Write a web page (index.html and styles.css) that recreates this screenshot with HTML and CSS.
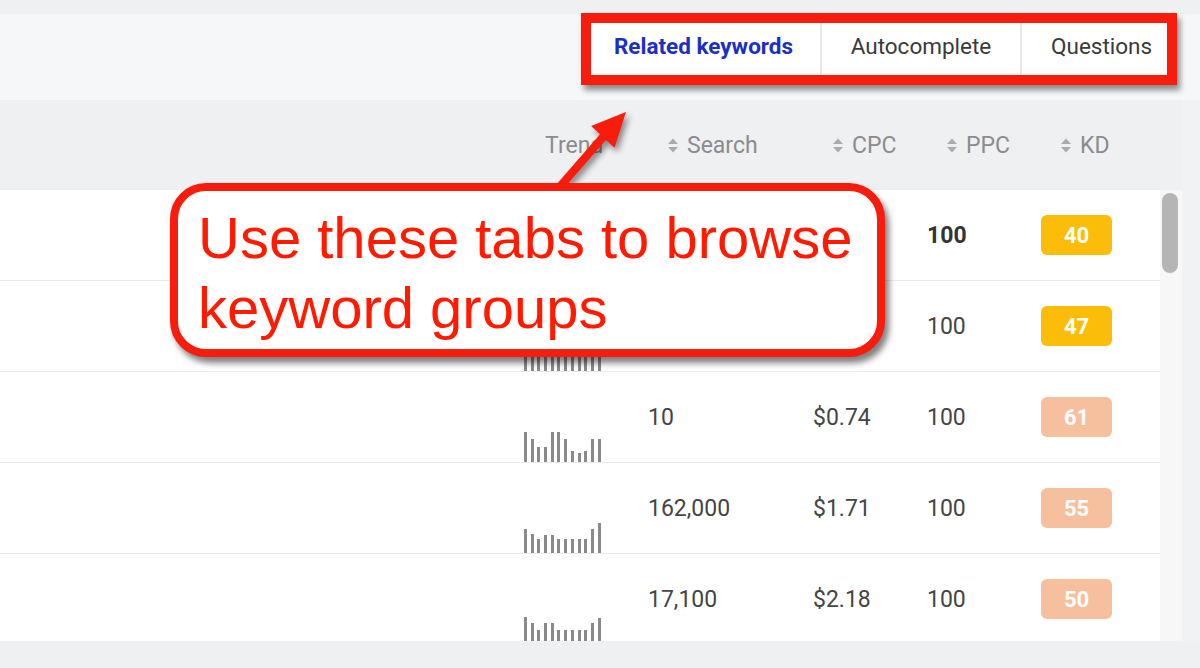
FILE: index.html
```html
<!DOCTYPE html>
<html lang="en">
<head>
<meta charset="utf-8">
<title>Keywords</title>
<link rel="stylesheet" href="styles.css">
</head>
<body>
<div class="page">
  <header class="topbar">
    <nav class="tabs">
      <div class="tab tab-related">Related keywords</div>
      <div class="tab tab-auto">Autocomplete</div>
      <div class="tab tab-questions">Questions</div>
    </nav>
  </header>

  <section class="grid-area">
    <div class="main">
      <div class="thead">
        <div class="th th-kw"></div>
        <div class="th th-trend">Trend</div>
        <div class="th"><svg class="sort" viewBox="0 0 10 15"><polygon points="0,6 5,0.5 10,6"/><polygon points="0,9 10,9 5,14.5"/></svg>Search</div>
        <div class="th"><svg class="sort" viewBox="0 0 10 15"><polygon points="0,6 5,0.5 10,6"/><polygon points="0,9 10,9 5,14.5"/></svg>CPC</div>
        <div class="th"><svg class="sort" viewBox="0 0 10 15"><polygon points="0,6 5,0.5 10,6"/><polygon points="0,9 10,9 5,14.5"/></svg>PPC</div>
        <div class="th"><svg class="sort" viewBox="0 0 10 15"><polygon points="0,6 5,0.5 10,6"/><polygon points="0,9 10,9 5,14.5"/></svg>KD</div>
      </div>

      <div class="tbody-wrap">
        <div class="rows">
          <div class="row row-active">
            <div class="td td-kw"></div>
            <div class="td td-trend"><div class="spark">
              <i class="bar" style="height:20px"></i><i class="bar" style="height:16px"></i><i class="bar" style="height:18px"></i><i class="bar" style="height:22px"></i><i class="bar" style="height:18px"></i><i class="bar" style="height:16px"></i><i class="bar" style="height:16px"></i><i class="bar" style="height:18px"></i><i class="bar" style="height:20px"></i><i class="bar" style="height:16px"></i><i class="bar" style="height:22px"></i><i class="bar" style="height:26px"></i>
            </div></div>
            <div class="td"></div>
            <div class="td"></div>
            <div class="td td-bold">100</div>
            <div class="td"><span class="kd kd-mid">40</span></div>
          </div>

          <div class="row">
            <div class="td td-kw"></div>
            <div class="td td-trend"><div class="spark">
              <i class="bar" style="height:18px"></i><i class="bar" style="height:18px"></i><i class="bar" style="height:18px"></i><i class="bar" style="height:18px"></i><i class="bar" style="height:18px"></i><i class="bar" style="height:18px"></i><i class="bar" style="height:18px"></i><i class="bar" style="height:18px"></i><i class="bar" style="height:18px"></i><i class="bar" style="height:18px"></i><i class="bar" style="height:18px"></i><i class="bar" style="height:18px"></i>
            </div></div>
            <div class="td"></div>
            <div class="td"></div>
            <div class="td">100</div>
            <div class="td"><span class="kd kd-mid">47</span></div>
          </div>

          <div class="row">
            <div class="td td-kw"></div>
            <div class="td td-trend"><div class="spark">
              <i class="bar" style="height:30px"></i><i class="bar" style="height:23px"></i><i class="bar" style="height:15px"></i><i class="bar" style="height:15px"></i><i class="bar" style="height:30px"></i><i class="bar" style="height:30px"></i><i class="bar" style="height:23px"></i><i class="bar" style="height:11px"></i><i class="bar" style="height:9px"></i><i class="bar" style="height:11px"></i><i class="bar" style="height:23px"></i><i class="bar" style="height:23px"></i>
            </div></div>
            <div class="td">10</div>
            <div class="td">$0.74</div>
            <div class="td">100</div>
            <div class="td"><span class="kd kd-high">61</span></div>
          </div>

          <div class="row">
            <div class="td td-kw"></div>
            <div class="td td-trend"><div class="spark">
              <i class="bar" style="height:24px"></i><i class="bar" style="height:19px"></i><i class="bar" style="height:14px"></i><i class="bar" style="height:18px"></i><i class="bar" style="height:18px"></i><i class="bar" style="height:14px"></i><i class="bar" style="height:14px"></i><i class="bar" style="height:14px"></i><i class="bar" style="height:14px"></i><i class="bar" style="height:14px"></i><i class="bar" style="height:24px"></i><i class="bar" style="height:30px"></i>
            </div></div>
            <div class="td">162,000</div>
            <div class="td">$1.71</div>
            <div class="td">100</div>
            <div class="td"><span class="kd kd-high">55</span></div>
          </div>

          <div class="row">
            <div class="td td-kw"></div>
            <div class="td td-trend"><div class="spark">
              <i class="bar" style="height:27px"></i><i class="bar" style="height:21px"></i><i class="bar" style="height:14px"></i><i class="bar" style="height:21px"></i><i class="bar" style="height:21px"></i><i class="bar" style="height:14px"></i><i class="bar" style="height:14px"></i><i class="bar" style="height:14px"></i><i class="bar" style="height:14px"></i><i class="bar" style="height:14px"></i><i class="bar" style="height:21px"></i><i class="bar" style="height:26px"></i>
            </div></div>
            <div class="td">17,100</div>
            <div class="td">$2.18</div>
            <div class="td">100</div>
            <div class="td"><span class="kd kd-high">50</span></div>
          </div>
        </div>
        <div class="scroll"><div class="thumb"></div></div>
      </div>
    </div>
    <div class="gutter"></div>
  </section>
</div>

<svg class="arrow" viewBox="0 0 110 95" width="110" height="95">
  <line x1="27" y1="90" x2="74" y2="36" class="arrow-shaft"/>
  <polygon points="96,12 84.5,47.8 61.1,26" class="arrow-head"/>
</svg>
<div class="callout">Use these tabs to browse<br>keyword groups</div>
</body>
</html>
```

FILE: styles.css
```css
* { box-sizing: border-box; }
html, body { margin: 0; padding: 0; }
body {
  width: 1200px;
  height: 668px;
  overflow: hidden;
  position: relative;
  background: #eef0f2;
  font-family: Roboto, "Noto Sans", sans-serif;
}
.page { display: flex; flex-direction: column; }

/* top bar with tabs */
.topbar {
  height: 100px;
  background: linear-gradient(#eff0f2 0 14px, #f6f7f9 14px);
  display: flex;
  justify-content: flex-end;
  align-items: flex-start;
  padding: 13px 23px 0 0;
}
.tabs {
  display: flex;
  gap: 2px;
  border: 10px solid #f81c0c;
  background: #e8e9eb;
  box-shadow: 3px 5px 6px rgba(0, 0, 0, 0.45);
}
.tab {
  height: 52px;
  display: flex;
  align-items: center;
  justify-content: center;
  background: #fff;
  font-size: 22.5px;
  color: #3a3a3a;
  padding-bottom: 7px;
}
.tab-related { width: 229px; font-weight: 700; color: #1b2fc4; padding-right: 4px; }
.tab-auto { width: 198px; }
.tab-questions { width: 145px; justify-content: flex-start; padding-left: 29px; }

/* table */
.grid-area { display: flex; height: 541px; }
.main { width: 1182px; display: flex; flex-direction: column; }
.thead {
  height: 90px;
  display: grid;
  grid-template-columns: 523px 125px 165px 114px 114px 141px;
  align-items: center;
  background: #eff0f2;
  color: #8a8c8f;
  font-size: 23px;
}
.th { display: flex; align-items: center; gap: 9px; padding-left: 20px; }
.th-kw { padding: 0; }
.th-trend { padding-left: 22px; }
.sort { width: 10px; height: 15px; fill: #a9abae; }

.tbody-wrap { display: flex; height: 451px; }
.rows { width: 1160px; background: #fff; overflow: hidden; }
.row {
  height: 91px;
  display: grid;
  grid-template-columns: 523px 125px 165px 114px 114px 119px;
  align-items: center;
  border-bottom: 1px solid #e9eaec;
  font-size: 23px;
  color: #454545;
}
.td-bold { font-weight: 700; color: #333; }
.td-trend { align-self: end; padding-left: 1px; }
.spark { display: flex; align-items: flex-end; gap: 3.7px; height: 31px; }
.bar { display: block; width: 3px; background: #8a8a8a; }
.kd {
  display: flex;
  align-items: center;
  justify-content: center;
  width: 71px;
  height: 40px;
  border-radius: 6px;
  color: #fff;
  font-weight: 700;
  font-size: 22px;
}
.kd-mid { background: #fcbd0a; }
.kd-high { background: #f6bf9d; }

.scroll { width: 22px; background: #f7f7f8; padding: 3px 0 0 2px; }
.thumb { width: 16px; height: 80px; border-radius: 8px; background: #b5b5b5; }
.gutter { flex: 1; background: #f1f2f4; }

/* annotation overlays */
.arrow {
  position: absolute;
  left: 530px;
  top: 100px;
  filter: drop-shadow(3px 4px 3px rgba(0, 0, 0, 0.45));
}
.arrow-shaft { stroke: #f81c0c; stroke-width: 8; }
.arrow-head { fill: #f81c0c; }
.callout {
  position: absolute;
  left: 170px;
  top: 183px;
  width: 715px;
  height: 174px;
  border: 8px solid #f81c0c;
  border-radius: 36px;
  background: #fff;
  box-shadow: 4px 6px 6px rgba(0, 0, 0, 0.5);
  font-family: "Liberation Sans", Arial, sans-serif;
  font-size: 58px;
  line-height: 70px;
  color: #ff1a00;
  padding: 12px 0 0 20px;
}
```
